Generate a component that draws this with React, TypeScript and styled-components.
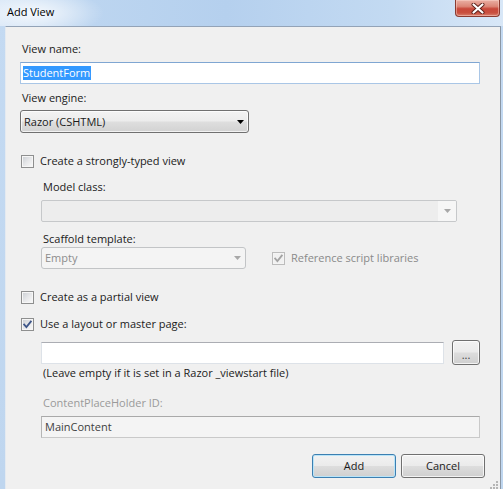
import React from "react";
import styled, { createGlobalStyle, css } from "styled-components";

const GlobalStyle = createGlobalStyle`
  html, body { margin: 0; padding: 0; background: #ffffff; }
  body { width: 503px; height: 489px; overflow: hidden; }
  *, *::before, *::after { box-sizing: border-box; }
`;

const FONT = `"Open Sans", "Noto Sans", "Liberation Sans", sans-serif`;

const Window = styled.div`
  width: 503px;
  height: 489px;
  display: flex;
  flex-direction: column;
  background: linear-gradient(180deg, #c4daf2 0%, #bfd6ef 100%);
  font-family: ${FONT};
  font-size: 11px;
  line-height: 16px;
  color: #1b1b1b;
`;

const TitleBar = styled.div`
  height: 26px;
  flex: none;
  display: flex;
  align-items: flex-start;
  justify-content: space-between;
  background:
    radial-gradient(ellipse 70px 24px at 34px 13px, rgba(255, 255, 255, 0.8), rgba(255, 255, 255, 0) 100%),
    linear-gradient(90deg, #d4e4f6 0%, #bcd5f0 18%, #b5d0ee 45%, #c3daf2 78%, #d8e7f7 100%);
`;

const TitleText = styled.div`
  padding: 4px 0 0 7px;
  color: #000;
`;

const CloseButton = styled.div`
  width: 45px;
  height: 17px;
  margin-right: 3px;
  display: flex;
  align-items: center;
  justify-content: center;
  border: 1px solid #8a3b31;
  border-top: none;
  border-radius: 0 0 4px 4px;
  background: linear-gradient(180deg, #eab0a4 0%, #dc8677 40%, #c8483a 55%, #c9503f 80%, #d9806e 100%);
  box-shadow: inset 0 0 0 1px rgba(255, 220, 210, 0.45);
`;

const Body = styled.div`
  flex: 1;
  display: flex;
  padding: 0 2px 0 5px;
  min-height: 0;
`;

const Client = styled.div`
  flex: 1;
  position: relative;
  display: flex;
  flex-direction: column;
  background: #f0f0f0;
  border-top: 1px solid #93a3b7;
  border-left: 1px solid #e4eaf1;
  border-right: 1px solid #8b97a5;
  padding: 14px 20px 0 14px;
`;

const FieldLabel = styled.div<{ $gap?: number; $muted?: boolean }>`
  height: 16px;
  margin-top: ${(p) => p.$gap ?? 0}px;
  padding-left: 2px;
  white-space: nowrap;
  color: ${(p) => (p.$muted ? "#9a9a9a" : "#1b1b1b")};
`;

const Indent = styled.div`
  display: flex;
  flex-direction: column;
  padding-left: 21px;
`;

const TextBox = styled.div<{ $gap?: number; $variant: "focused" | "normal" | "disabled" }>`
  height: 22px;
  margin-top: ${(p) => p.$gap ?? 0}px;
  display: flex;
  align-items: center;
  padding: 0 3px;
  white-space: nowrap;
  ${(p) =>
    p.$variant === "focused"
      ? css`
          background: #fff;
          border: 1px solid #a9c6e6;
          border-top-color: #7fa6d2;
        `
      : p.$variant === "normal"
      ? css`
          background: #fff;
          border: 1px solid #dde2e8;
          border-top-color: #abadb3;
        `
      : css`
          background: #f4f4f4;
          border: 1px solid #c9c9c9;
          border-top-color: #a9a9a9;
          border-left-color: #b5b5b5;
          color: #3e3e3e;
        `}
`;

const BrowseBox = styled(TextBox)`
  flex: 1;
`;

const Selection = styled.span`
  background: #3399ff;
  color: #fff;
  line-height: 14px;
  padding: 0 1px 0 0;
  margin-left: -1px;
`;

const ComboBox = styled.div<{ $gap?: number; $width: number; $disabled?: boolean }>`
  width: ${(p) => p.$width}px;
  height: ${(p) => (p.$disabled ? 22 : 23)}px;
  margin-top: ${(p) => p.$gap ?? 0}px;
  flex: none;
  display: flex;
  align-items: center;
  justify-content: space-between;
  padding: 0 4px 0 3px;
  border-radius: 3px;
  white-space: nowrap;
  ${(p) =>
    p.$disabled
      ? css`
          border: 1px solid #c2c4c6;
          background: #f4f4f4;
          color: #8d8d8d;
        `
      : css`
          border: 1px solid #707070;
          background: linear-gradient(180deg, #f3f3f3 0%, #ececec 48%, #dedede 52%, #d2d2d2 100%);
          box-shadow: inset 0 0 0 1px rgba(255, 255, 255, 0.7);
        `}
`;

const EditCombo = styled.div<{ $gap?: number; $width: number }>`
  width: ${(p) => p.$width}px;
  height: 22px;
  margin-top: ${(p) => p.$gap ?? 0}px;
  display: flex;
  border: 1px solid #c6c8ca;
  border-radius: 2px;
  background: #ededed;
  overflow: hidden;
`;

const EditComboField = styled.div`
  flex: 1;
`;

const EditComboButton = styled.div`
  width: 18px;
  display: flex;
  align-items: center;
  justify-content: center;
  background: #f6f6f6;
`;

const Arrow = ({ color }: { color: string }) => (
  <svg width="7" height="4" viewBox="0 0 7 4">
    <polygon points="0,0 7,0 3.5,4" fill={color} />
  </svg>
);

const CheckRow = styled.div<{ $gap?: number }>`
  height: 16px;
  margin-top: ${(p) => p.$gap ?? 0}px;
  display: flex;
  align-items: center;
  gap: 6px;
  white-space: nowrap;
`;

const CheckBox = styled.span<{ $disabled?: boolean }>`
  width: 13px;
  height: 13px;
  flex: none;
  margin: 1px 0 0 1px;
  display: flex;
  align-items: center;
  justify-content: center;
  border: 1px solid ${(p) => (p.$disabled ? "#bcbcbc" : "#8e8f8f")};
  box-shadow: inset 0 0 0 1px ${(p) => (p.$disabled ? "#f4f4f4" : "#f6f6f6")};
  background: ${(p) =>
    p.$disabled ? "#f1f1f1" : "linear-gradient(135deg, #c9cdd2 0%, #e6e7e9 50%, #fbfbfb 100%)"};
`;

const CheckLabel = styled.span<{ $muted?: boolean }>`
  color: ${(p) => (p.$muted ? "#8a8a8a" : "#1b1b1b")};
`;

const CheckMark = ({ color }: { color: string }) => (
  <svg width="11" height="11" viewBox="0 0 11 11">
    <path d="M2.2 5.6 L4.4 8 L8.8 2.6" fill="none" stroke={color} strokeWidth="1.8" strokeLinecap="square" />
  </svg>
);

const ScaffoldRow = styled.div`
  display: flex;
  align-items: center;
  gap: 25px;
`;

const BrowseRow = styled.div<{ $gap?: number }>`
  margin-top: ${(p) => p.$gap ?? 0}px;
  height: 25px;
  display: flex;
  align-items: center;
  gap: 8px;
`;

const buttonFace = css`
  border: 1px solid #707070;
  border-radius: 3px;
  background: linear-gradient(180deg, #f2f2f2 0%, #ebebeb 48%, #dddddd 52%, #cfcfcf 100%);
  box-shadow: inset 0 0 0 1px rgba(255, 255, 255, 0.75);
`;

const SmallButton = styled.div`
  width: 28px;
  height: 25px;
  flex: none;
  display: flex;
  align-items: flex-end;
  justify-content: center;
  padding-bottom: 4px;
  line-height: 10px;
  color: #444;
  ${buttonFace}
`;

const ButtonRow = styled.div`
  margin-top: 16px;
  margin-right: -5px;
  display: flex;
  justify-content: flex-end;
  gap: 5px;
`;

const PushButton = styled.div<{ $default?: boolean }>`
  width: 84px;
  height: 24px;
  display: flex;
  align-items: center;
  justify-content: center;
  ${buttonFace}
  ${(p) =>
    p.$default &&
    css`
      border-color: #3c7fb1;
      box-shadow: inset 0 0 0 1px #b9e4f8;
    `}
`;

const Grip = styled.div`
  position: absolute;
  right: 1px;
  bottom: 1px;
  width: 10px;
  height: 10px;
`;

export default function App() {
  return (
    <>
      <GlobalStyle />
      <Window>
        <TitleBar>
          <TitleText>Add View</TitleText>
          <CloseButton>
            <svg width="14" height="11" viewBox="0 0 14 11">
              <path d="M2.5 1.5 L11.5 9.5 M11.5 1.5 L2.5 9.5" stroke="#5a1f18" strokeWidth="4" strokeLinecap="round" />
              <path d="M2.5 1.5 L11.5 9.5 M11.5 1.5 L2.5 9.5" stroke="#ffffff" strokeWidth="2.2" strokeLinecap="round" />
            </svg>
          </CloseButton>
        </TitleBar>
        <Body>
          <Client>
            <FieldLabel>View name:</FieldLabel>
            <TextBox $gap={5} $variant="focused">
              <Selection>StudentForm</Selection>
            </TextBox>
            <FieldLabel $gap={6}>View engine:</FieldLabel>
            <ComboBox $gap={4} $width={229}>
              <span>Razor (CSHTML)</span>
              <Arrow color="#000" />
            </ComboBox>

            <CheckRow $gap={20}>
              <CheckBox />
              <CheckLabel>Create a strongly-typed view</CheckLabel>
            </CheckRow>
            <Indent>
              <FieldLabel $gap={10}>Model class:</FieldLabel>
              <EditCombo $gap={5} $width={416}>
                <EditComboField />
                <EditComboButton>
                  <Arrow color="#a8a8a8" />
                </EditComboButton>
              </EditCombo>
              <FieldLabel $gap={9}>Scaffold template:</FieldLabel>
              <ScaffoldRow>
                <ComboBox $width={205} $disabled>
                  <span>Empty</span>
                  <Arrow color="#a8a8a8" />
                </ComboBox>
                <CheckRow>
                  <CheckBox $disabled>
                    <CheckMark color="#a3a3a3" />
                  </CheckBox>
                  <CheckLabel $muted>Reference script libraries</CheckLabel>
                </CheckRow>
              </ScaffoldRow>
            </Indent>

            <CheckRow $gap={20}>
              <CheckBox />
              <CheckLabel>Create as a partial view</CheckLabel>
            </CheckRow>
            <CheckRow $gap={11}>
              <CheckBox>
                <CheckMark color="#3d5588" />
              </CheckBox>
              <CheckLabel>Use a layout or master page:</CheckLabel>
            </CheckRow>
            <Indent>
              <BrowseRow $gap={8}>
                <BrowseBox $variant="normal" />
                <SmallButton>...</SmallButton>
              </BrowseRow>
              <FieldLabel>(Leave empty if it is set in a Razor _viewstart file)</FieldLabel>
              <FieldLabel $gap={14} $muted>
                ContentPlaceHolder ID:
              </FieldLabel>
              <TextBox $gap={5} $variant="disabled">
                MainContent
              </TextBox>
            </Indent>

            <ButtonRow>
              <PushButton $default>Add</PushButton>
              <PushButton>Cancel</PushButton>
            </ButtonRow>

            <Grip>
              <svg width="10" height="10" viewBox="0 0 10 10">
                {[
                  [7, 1],
                  [4, 4],
                  [7, 4],
                  [1, 7],
                  [4, 7],
                  [7, 7],
                ].map(([x, y]) => (
                  <rect key={`${x}-${y}`} x={x} y={y} width="2" height="2" fill="#b5b5b5" />
                ))}
              </svg>
            </Grip>
          </Client>
        </Body>
      </Window>
    </>
  );
}
